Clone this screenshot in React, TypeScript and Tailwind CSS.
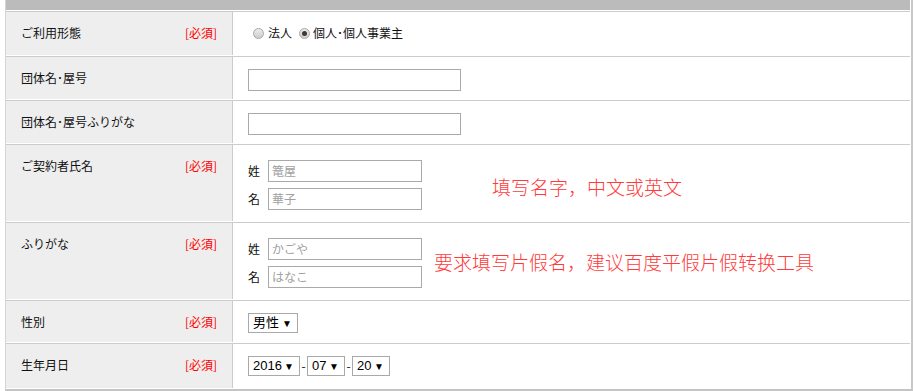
import type { ReactNode } from 'react';

const jp = { fontFamily: '"Noto Sans CJK JP", "Liberation Sans", sans-serif' };
const sc = { fontFamily: '"Noto Sans CJK SC", "Liberation Sans", sans-serif' };
const num = { fontFamily: '"Liberation Sans", "Noto Sans CJK JP", sans-serif' };

function Required() {
  return <span className="text-[#ff0000]">[必須]</span>;
}

interface RowProps {
  label: string;
  required?: boolean;
  height: string;
  contentClass?: string;
  children?: ReactNode;
}

function Row({ label, required, height, contentClass = 'pt-[12px]', children }: RowProps) {
  return (
    <div className={`mt-px flex border-t border-[#cccccc] ${height}`}>
      <div className="flex w-[226px] shrink-0 items-start justify-between bg-[#eeeeee] pl-[15px] pr-[15px] pt-[12px] leading-[18px]">
        <span>{label}</span>
        {required && <Required />}
      </div>
      <div className="w-px shrink-0 bg-[#cccccc]" />
      <div className={`flex-1 pl-[15px] ${contentClass}`}>{children}</div>
    </div>
  );
}

function Radio({ checked }: { checked?: boolean }) {
  return (
    <span className="inline-flex h-[11px] w-[11px] items-center justify-center rounded-full border border-[#a8a8a8] bg-gradient-to-b from-[#ececec] to-[#cdcdcd]">
      {checked && <span className="h-[5px] w-[5px] rounded-full bg-[#3a3a3a]" />}
    </span>
  );
}

function TextBox({ width, placeholder }: { width: string; placeholder?: string }) {
  return (
    <div className={`flex h-[22px] items-center border border-[#a9a9a9] bg-white pl-[3px] text-[12px] text-[#a0a0a0] ${width}`}>
      {placeholder}
    </div>
  );
}

function Select({ value, width }: { value: string; width: string }) {
  return (
    <div
      className={`flex h-[20px] items-center justify-between border border-[#a9a9a9] bg-white pl-[4px] pr-[5px] text-[13px] text-black ${width}`}
      style={num}
    >
      <span>{value}</span>
      <span className="text-[10px]">▼</span>
    </div>
  );
}

function NamePair({ first, last }: { first: string; last: string }) {
  return (
    <div className="flex flex-col gap-[6px]">
      <div className="flex items-center">
        <span className="w-[20px]">姓</span>
        <TextBox width="w-[154px]" placeholder={first} />
      </div>
      <div className="flex items-center">
        <span className="w-[20px]">名</span>
        <TextBox width="w-[154px]" placeholder={last} />
      </div>
    </div>
  );
}

export default function App() {
  return (
    <div className="h-[391px] w-[913px] bg-white text-[12px] text-[#111]" style={jp}>
      <div className="ml-[5px] w-[908px] border-b-2 border-l border-r-2 border-b-[#c4c4c4] border-l-[#d4d4d4] border-r-[#c8c8c8] pb-px pr-px">
        {/* header bar */}
        <div className="h-[10px] bg-[#bbbbbb]" />

        <Row label="ご利用形態" required height="h-[44px]">
          <div className="flex items-center leading-[18px]">
            <span className="ml-[5px] flex"><Radio /></span>
            <span className="ml-[4px]">法人</span>
            <span className="ml-[7px] flex"><Radio checked /></span>
            <span className="ml-[3px]">個人･個人事業主</span>
          </div>
        </Row>

        <Row label="団体名･屋号" height="h-[43px]">
          <TextBox width="w-[213px]" />
        </Row>

        <Row label="団体名･屋号ふりがな" height="h-[43px]">
          <TextBox width="w-[213px]" />
        </Row>

        <Row label="ご契約者氏名" required height="h-[77px]" contentClass="pt-[15px]">
          <div className="flex items-start">
            <NamePair first="篭屋" last="華子" />
            <span className="ml-[70px] mt-[15px] text-[19px] font-light leading-[24px] text-[#ff3b3b]" style={sc}>
              填写名字，中文或英文
            </span>
          </div>
        </Row>

        <Row label="ふりがな" required height="h-[77px]" contentClass="pt-[15px]">
          <div className="flex items-start">
            <NamePair first="かごや" last="はなこ" />
            <span className="ml-[12px] mt-[12px] text-[19px] font-light leading-[24px] text-[#ff3b3b]" style={sc}>
              要求填写片假名，建议百度平假片假转换工具
            </span>
          </div>
        </Row>

        <Row label="性別" required height="h-[42px]">
          <Select value="男性" width="w-[50px]" />
        </Row>

        <Row label="生年月日" required height="h-[45px]">
          <div className="flex items-center">
            <Select value="2016" width="w-[52px]" />
            <span className="w-[7px] text-center">-</span>
            <Select value="07" width="w-[38px]" />
            <span className="w-[7px] text-center">-</span>
            <Select value="20" width="w-[38px]" />
          </div>
        </Row>
      </div>
    </div>
  );
}
